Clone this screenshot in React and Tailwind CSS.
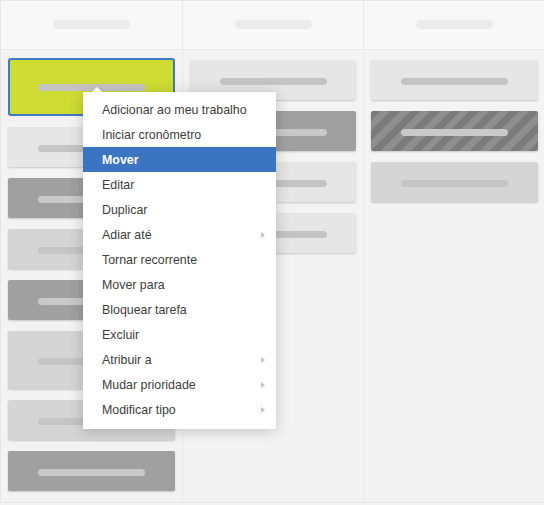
import React from "react";

/************************************
 * Data
 ************************************/
const MENU = [
  { label: "Adicionar ao meu trabalho" },
  { label: "Iniciar cronômetro" },
  { label: "Mover", active: true },
  { label: "Editar" },
  { label: "Duplicar" },
  { label: "Adiar até", sub: true },
  { label: "Tornar recorrente" },
  { label: "Mover para" },
  { label: "Bloquear tarefa" },
  { label: "Excluir" },
  { label: "Atribuir a", sub: true },
  { label: "Mudar prioridade", sub: true },
  { label: "Modificar tipo", sub: true },
];

/************************************
 * Components
 ************************************/
function Pill({ dark }) {
  return (
    <div
      className={
        "h-[7px] w-[107px] rounded-full mt-[3px] " +
        (dark ? "bg-[#c9c9c9]" : "bg-[#c4c4c4]")
      }
    />
  );
}

function Card({ tone = "light", tall }) {
  const tones = {
    light: "bg-[#e6e6e6]",
    mid: "bg-[#d5d5d5]",
    dark: "bg-[#a0a0a0]",
    striped:
      "bg-[repeating-linear-gradient(135deg,#7b7b7b_0_7px,#8e8e8e_7px_14px)]",
  };
  return (
    <div
      className={
        "flex items-center justify-center rounded-[2px] shadow-[0_1px_2px_rgba(0,0,0,0.18)] " +
        (tall ? "h-[58px] " : "h-[40px] ") +
        tones[tone]
      }
    >
      <Pill dark={tone === "dark" || tone === "striped"} />
    </div>
  );
}

function Column({ children, last }) {
  return (
    <div
      className={
        "flex flex-col " + (last ? "" : "border-r border-[#e9e9e9]")
      }
    >
      <div className="h-[49px] bg-[#f8f8f8] border-b border-[#ebebeb] flex items-center justify-center">
        <div className="h-[9px] w-[77px] rounded-full bg-[#ebebeb] -mt-[1px]" />
      </div>
      <div className="flex-1 flex flex-col gap-[11px] px-[7px] pt-[10px]">
        {children}
      </div>
    </div>
  );
}

function ContextMenu() {
  return (
    <div className="absolute left-[83px] top-[92px] w-[193px] bg-white shadow-[0_2px_14px_rgba(0,0,0,0.2)] pt-[5px] pb-[7px] font-['Liberation_Sans',Arial,sans-serif] text-[12.4px]">
      <div className="absolute -top-[5px] left-[9px] w-0 h-0 border-l-[5px] border-r-[5px] border-b-[5px] border-l-transparent border-r-transparent border-b-white" />
      {MENU.map((m) => (
        <div
          key={m.label}
          className={
            "h-[25px] flex items-center justify-between pl-[19px] pr-[11px] pt-[1px] " +
            (m.active ? "bg-[#3b75c1] text-white font-bold" : "text-[#3d3d3d]")
          }
        >
          <span>{m.label}</span>
          {m.sub && (
            <span className="w-0 h-0 border-t-[3.5px] border-b-[3.5px] border-l-[4px] border-t-transparent border-b-transparent border-l-[#c4c4c4]" />
          )}
        </div>
      ))}
    </div>
  );
}

/************************************
 * App root
 ************************************/
export default function App() {
  return (
    <div className="relative w-[544px] h-[505px] overflow-hidden bg-[#f3f3f3]">
      <div className="h-[503px] grid grid-cols-[182px_181px_181px] border-t border-l border-b border-[#e6e6e6]">
        <Column>
          <div className="-mt-[2px] h-[58px] rounded-[3px] border-2 border-[#3f79c6] bg-[#cedc34] flex items-center justify-center">
            <div className="h-[7px] w-[107px] rounded-full bg-[#c4c4c4]" />
          </div>
          <Card tone="light" />
          <Card tone="dark" />
          <Card tone="mid" />
          <Card tone="dark" />
          <Card tone="mid" tall />
          <Card tone="mid" />
          <Card tone="dark" />
        </Column>
        <Column>
          <Card tone="light" />
          <Card tone="dark" />
          <Card tone="light" />
          <Card tone="light" />
        </Column>
        <Column last>
          <Card tone="light" />
          <Card tone="striped" />
          <Card tone="mid" />
        </Column>
      </div>
      <ContextMenu />
    </div>
  );
}
